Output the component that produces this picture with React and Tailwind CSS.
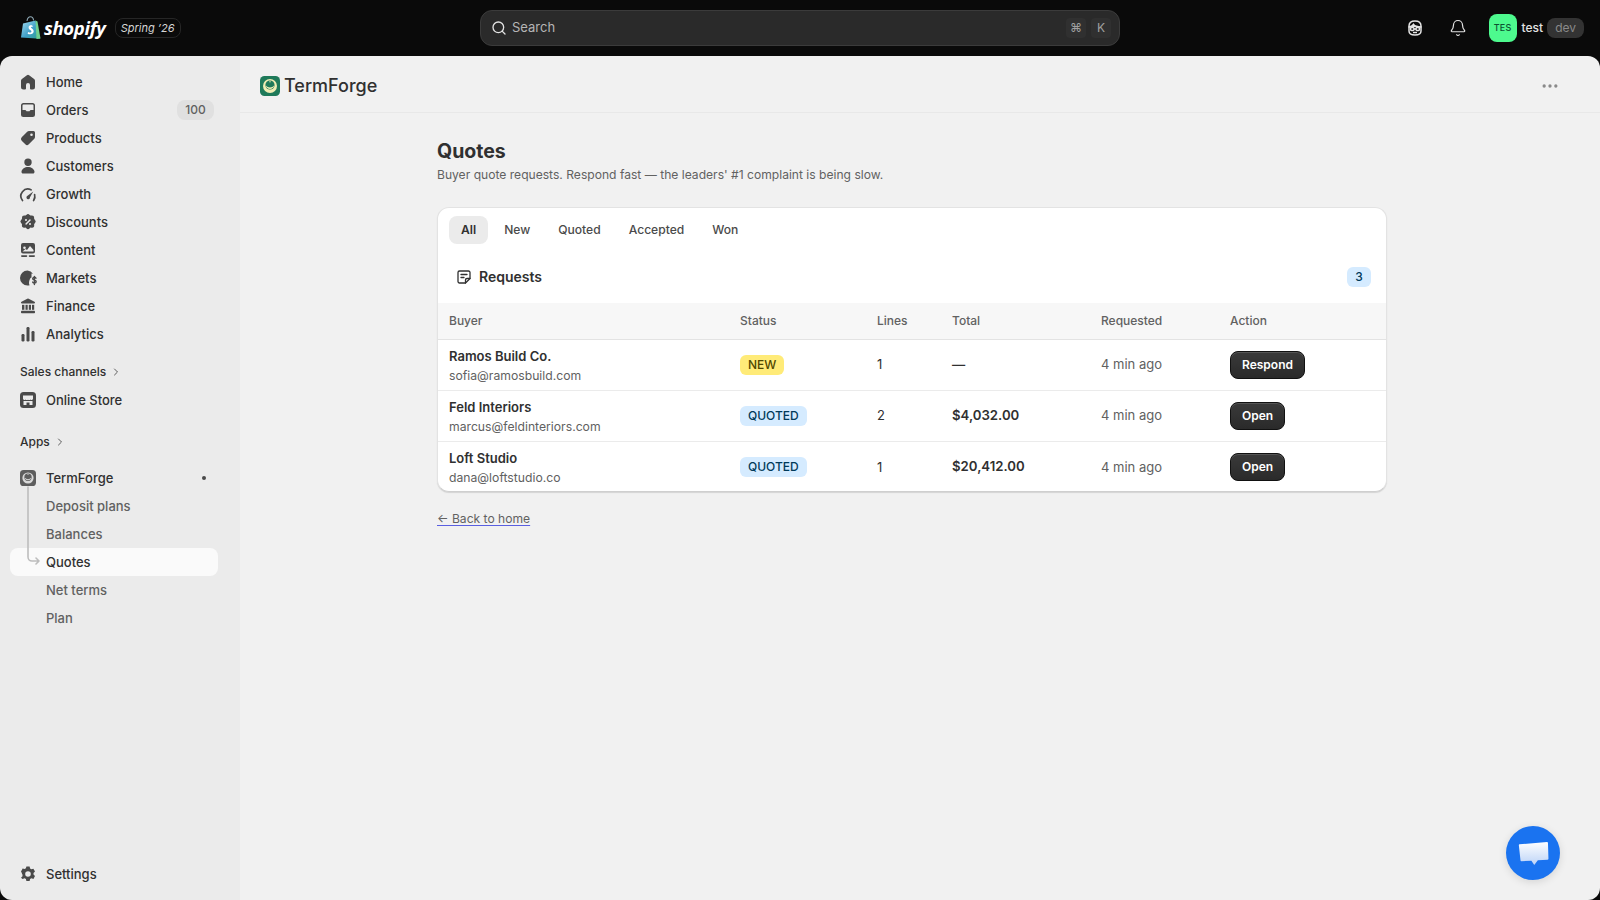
import { MoreHorizontal, Search, ChevronRight, Bell } from "lucide-react";

const ICONS = {
  home: <path d="M8.900 3.200a1.800 1.800 0 0 1 2.200 0l5 3.900c.6.4.9 1 .9 1.700V15a2.500 2.500 0 0 1-2.500 2.500H13a1 1 0 0 1-1-1V13a2 2 0 0 0-4 0v3.500a1 1 0 0 1-1 1H5.500A2.500 2.500 0 0 1 3 15V8.800c0-.7.300-1.300.9-1.700z" />,
  orders: <path fillRule="evenodd" d="M5.500 3A2.500 2.500 0 0 0 3 5.500v9A2.500 2.500 0 0 0 5.500 17h9a2.500 2.500 0 0 0 2.500-2.500v-9A2.500 2.500 0 0 0 14.500 3zM4.500 5.500a1 1 0 0 1 1-1h9a1 1 0 0 1 1 1V10h-2.600c-.5 0-.9.300-1.100.7l-.3.600H8.500l-.3-.6c-.2-.4-.6-.7-1.100-.7H4.500z" />,
  products: <path fillRule="evenodd" d="M11 3h4.500A1.500 1.500 0 0 1 17 4.500V9c0 .7-.3 1.300-.7 1.800l-5.500 5.500a2.500 2.500 0 0 1-3.500 0l-3.600-3.600a2.500 2.500 0 0 1 0-3.500l5.500-5.500C9.700 3.300 10.300 3 11 3m2.500 5a1.300 1.300 0 1 0 0-2.600 1.300 1.300 0 0 0 0 2.600" />,
  customers: <path d="M10 2.500a3.700 3.700 0 1 1 0 7.400 3.700 3.700 0 0 1 0-7.400M10 11c-3.300 0-6 1.900-6.500 4.400-.2 1 .6 2.100 1.700 2.100h9.600c1.100 0 1.900-1.100 1.700-2.100C16 12.900 13.300 11 10 11" />,
  growth: <><path fill="none" stroke="currentColor" strokeWidth="1.700" strokeLinecap="round" d="M4.500 16.500a7 7 0 0 1 8.500-10.700" /><path d="M15.300 7.500 12 13.200a1.800 1.800 0 1 1-2.500-1.400z" /><path fill="none" stroke="currentColor" strokeWidth="1.700" strokeLinecap="round" d="M16.600 10.500a7 7 0 0 1-1 6" /></>,
  discounts: <path fillRule="evenodd" d="M8.300 2.900a2.400 2.400 0 0 1 3.400 0l.8.700 1.100-.1a2.400 2.400 0 0 1 2.600 2.400l-.1 1.100.8.800a2.400 2.400 0 0 1 0 3.400l-.8.800.1 1.100a2.400 2.400 0 0 1-2.600 2.600l-1.100-.1-.8.700a2.400 2.400 0 0 1-3.400 0l-.8-.7-1.100.1a2.400 2.400 0 0 1-2.500-2.600l.1-1.100-.8-.8a2.400 2.400 0 0 1 0-3.400l.8-.8-.1-1.100a2.400 2.400 0 0 1 2.500-2.400l1.100.1zM12.600 8.500a.8.800 0 0 0-1.100-1.100l-4 4a.8.800 0 0 0 1.100 1.100zM8 9a1 1 0 1 0 0-2 1 1 0 0 0 0 2m4 4a1 1 0 1 0 0-2 1 1 0 0 0 0 2" />,
  content: <><path fillRule="evenodd" d="M5 3a2 2 0 0 0-2 2v6.500a2 2 0 0 0 2 2h10a2 2 0 0 0 2-2V5a2 2 0 0 0-2-2zm1.500 3.500a1.300 1.300 0 1 1 0 2.600 1.300 1.300 0 0 1 0-2.600m5.500-.5 3.500 4v1.500h-11l3-2.500 1.500 1z" /><rect x="3" y="15.300" width="6.300" height="1.600" rx=".8" /><rect x="10.700" y="15.300" width="6.300" height="1.600" rx=".8" /></>,
  markets: <><path d="M9.500 2.500a7.500 7.500 0 0 0 0 15c.8 0 1.500-.1 2.100-.3a5 5 0 0 1-.6-2.200c0-1.500.5-3.500 1.500-5l1-.5V5.500l1.500.300A7.500 7.500 0 0 0 9.500 2.500" /><path fill="none" stroke="currentColor" strokeWidth="1.400" strokeLinecap="round" d="M18 10.200c-.3-.6-.9-.9-1.600-.9-1 0-1.700.6-1.700 1.400 0 2 3.500 1 3.500 3 0 .8-.8 1.400-1.800 1.400-.7 0-1.400-.4-1.700-1M16.400 8.500v8" /></>,
  finance: <><path d="M9.300 2.700a1.500 1.500 0 0 1 1.400 0l5.800 3c.9.500.6 1.800-.4 1.800H3.900c-1 0-1.300-1.300-.4-1.800z" /><rect x="4" y="8.800" width="2.400" height="5" /><rect x="7.500" y="8.800" width="2.200" height="5" /><rect x="10.800" y="8.800" width="2.200" height="5" /><rect x="14" y="8.800" width="2.200" height="5" /><rect x="3" y="14.800" width="14" height="2.400" rx=".8" /></>,
  analytics: <><rect x="3.500" y="10" width="3" height="7.500" rx="1.200" /><rect x="8.500" y="3" width="3" height="14.500" rx="1.200" /><rect x="13.500" y="7" width="3" height="10.500" rx="1.200" /></>,
  settings: <path fillRule="evenodd" d="M8.400 2.500h3.200l.5 2.100 1.300.7 2-.6 1.600 2.800-1.500 1.500v1.600l1.500 1.500-1.600 2.800-2-.6-1.300.7-.5 2.100H8.400l-.5-2.100-1.300-.7-2 .6L3 13.800l1.500-1.500v-1.600L3 7.200l.6-.7 1-2.100 2 .6 1.300-.7zM10 12.800a2.800 2.800 0 1 0 0-5.600 2.800 2.800 0 0 0 0 5.600" />,
};

const NAV = [
  ["home", "Home"],
  ["orders", "Orders", "100"],
  ["products", "Products"],
  ["customers", "Customers"],
  ["growth", "Growth"],
  ["discounts", "Discounts"],
  ["content", "Content"],
  ["markets", "Markets"],
  ["finance", "Finance"],
  ["analytics", "Analytics"],
];

const ROWS = [
  { name: "Ramos Build Co.", email: "sofia@ramosbuild.com", status: "NEW", lines: 1, total: "—", action: "Respond" },
  { name: "Feld Interiors", email: "marcus@feldinteriors.com", status: "QUOTED", lines: 2, total: "$4,032.00", action: "Open" },
  { name: "Loft Studio", email: "dana@loftstudio.co", status: "QUOTED", lines: 1, total: "$20,412.00", action: "Open" },
];

function NavIcon({ name }) {
  return (
    <svg viewBox="0 0 20 20" fill="currentColor" className="w-5 h-5 text-[#4a4a4a] shrink-0">
      {ICONS[name]}
    </svg>
  );
}

function NavItem({ icon, label, badge }) {
  return (
    <div className="flex items-center h-7 pl-[18px] pr-[26px] text-[13px] font-medium text-[#303030]">
      <NavIcon name={icon} />
      <span className="ml-2 flex-1 pt-[2px]">{label}</span>
      {badge && (
        <span className="h-5 w-[37px] flex items-center justify-center rounded-lg bg-[#e0e0e0] text-xs text-[#616161]">{badge}</span>
      )}
    </div>
  );
}

function SectionLabel({ label, className }) {
  return (
    <div className={`flex items-center h-7 pl-5 text-xs font-medium text-[#303030] ${className}`}>
      {label}
      <ChevronRight className="w-3 h-3 ml-1 text-[#5c5c5c]" />
    </div>
  );
}

function AppLogo({ gray }) {
  const bg = gray ? "#5e5e5e" : "#1f7a5a";
  const fg = gray ? "#d9d9d9" : "#f0edb4";
  return (
    <svg viewBox="0 0 20 20" className="w-full h-full">
      <rect width="20" height="20" rx="4.500" fill={bg} />
      <circle cx="10" cy="10" r="7" fill={fg} />
      <circle cx="10" cy="9" r="4.600" fill={bg} />
      <path d="M5.800 9.500a4.300 4.300 0 0 0 8.400 0 5.500 5.500 0 0 1-8.400 0" fill={fg} />
      <circle cx="10" cy="5.700" r=".7" fill={fg} />
    </svg>
  );
}

function Sidebar() {
  return (
    <aside className="w-[240px] shrink-0 bg-[#ebebeb] flex flex-col pt-3 pb-3">
      {NAV.map(([icon, label, badge]) => (
        <NavItem key={label} icon={icon} label={label} badge={badge} />
      ))}
      <SectionLabel label="Sales channels" className="mt-[10px]" />
      <div className="flex items-center h-7 pl-5 text-[13px] font-medium text-[#303030]">
        <svg viewBox="0 0 16 16" className="w-4 h-4 shrink-0">
          <rect width="16" height="16" rx="3.500" fill="#4a4a4a" />
          <path d="M3 3.500h10v3.300a1.400 1.400 0 0 1-2.500.6 1.900 1.900 0 0 1-2.500.3 1.900 1.900 0 0 1-2.500-.3A1.400 1.400 0 0 1 3 6.800z" fill="#ebebeb" />
          <path d="M3.500 9h9v4h-3v-2.500h-3V13h-3z" fill="#ebebeb" />
        </svg>
        <span className="ml-2.5 pt-[2px]">Online Store</span>
      </div>
      <SectionLabel label="Apps" className="mt-[14px]" />
      <div className="relative mt-2">
        <div className="flex items-center h-7 pl-5 pr-[34px] text-[13px] font-medium text-[#303030]">
          <span className="w-4 h-4 shrink-0"><AppLogo gray /></span>
          <span className="ml-2.5 flex-1 pt-[2px]">TermForge</span>
          <span className="w-1 h-1 rounded-full bg-[#4a4a4a]" />
        </div>
        {["Deposit plans", "Balances", "Quotes", "Net terms", "Plan"].map((label) =>
          label === "Quotes" ? (
            <div key={label} className="flex items-center h-7 mx-2.5 w-[208px] pl-9 pt-[2px] rounded-lg bg-[#fafafa] text-[13px] font-medium text-[#303030]">
              {label}
            </div>
          ) : (
            <div key={label} className="flex items-center h-7 pl-[46px] pt-[2px] text-[13px] font-medium text-[#616161]">
              {label}
            </div>
          )
        )}
        <svg viewBox="0 0 14 82" className="absolute left-[27px] top-[22px] w-[14px] h-[82px]" fill="none" stroke="#bdbdbd" strokeWidth="1.600" strokeLinecap="round" strokeLinejoin="round">
          <path d="M1 1v70a4 4 0 0 0 4 4h7M9 72l3 3-3 3" />
        </svg>
      </div>
      <div className="mt-auto">
        <NavItem icon="settings" label="Settings" />
      </div>
    </aside>
  );
}

function TopBar() {
  return (
    <header className="h-14 shrink-0 bg-[#0a0a0a] grid grid-cols-[1fr_640px_1fr] items-center text-white">
      <div className="flex items-center pl-5">
        <svg viewBox="0 0 22 24" className="w-[22px] h-6 shrink-0">
          <defs>
            <linearGradient id="bag" x1="0" y1="0" x2="1" y2="1">
              <stop offset="0" stopColor="#a5dcf0" />
              <stop offset="0.55" stopColor="#3f9fc8" />
              <stop offset="1" stopColor="#2fa08a" />
            </linearGradient>
          </defs>
          <path d="M7 5c.4-2.600 1.800-4.200 3.500-4.200 1.600 0 2.800 1.400 3.100 3.500" fill="none" stroke="#8fa9b5" strokeWidth="1.100" />
          <path d="M15.500 4.500 20 22.800 1 21.500 3 7.500z" fill="url(#bag)" />
          <path d="M15.500 4.500 17.500 5.500 20.500 22.500 16.500 23z" fill="#6fcf8f" />
          <path d="M12.500 9.700c-.8-.5-3.800-.8-3.900 1.700-.1 2.400 2.900 2.300 2.800 4.100 0 1.200-1.600 1.300-3.300.4l-.5 1.800c2.500 1.200 6.100.7 6.100-2.400 0-2.600-2.900-2.900-2.800-4 0-.8 1.200-.8 2-.4z" fill="#fff" />
        </svg>
        <span className="ml-[2px] font-['Open_Sans',sans-serif] font-bold italic text-[18.500px] leading-none -tracking-[0.3px] text-white">shopify</span>
        <span className="ml-[9px] h-5 px-[5px] flex items-center rounded-lg border border-[#262626] text-[11px] italic text-[#d4d4d4]">Spring ’26</span>
      </div>
      <div className="h-9 flex items-center rounded-xl bg-[#2a2a2a] border border-[#3b3b3b] pl-2.5 pr-2">
        <Search className="w-4 h-4 text-[#e3e3e3]" strokeWidth={2} />
        <span className="ml-[5px] flex-1 text-[13px] text-[#b5b5b5]">Search</span>
        <span className="w-5 h-5 flex items-center justify-center rounded bg-[#303030] text-xs text-[#a0a0a0]">⌘</span>
        <span className="ml-[5px] w-5 h-5 flex items-center justify-center rounded bg-[#303030] text-xs text-[#a0a0a0]">K</span>
      </div>
      <div className="flex items-center justify-end pr-4">
        <svg viewBox="0 0 20 20" className="w-5 h-5 text-[#e3e3e3]" fill="none" stroke="currentColor" strokeWidth="1.500">
          <path d="M4 8c0-3 1.500-5 6-5s6 2 6 5v5c0 2.500-2.500 4-6 4s-6-1.500-6-4z" />
          <path d="M3.500 9c3 0 4-.8 5-2.500 1 1.700 4 2.500 8 2.500" fill="currentColor" />
          <rect x="5.500" y="9.500" width="3.500" height="3" rx="1.200" />
          <rect x="11" y="9.500" width="3.500" height="3" rx="1.200" />
          <path d="M9 11h2M8 14.500h4" />
        </svg>
        <Bell className="ml-6 w-[18px] h-[18px] text-[#e3e3e3]" strokeWidth={1.600} />
        <span className="ml-[22px] w-7 h-7 flex items-center justify-center rounded-lg bg-[#4dfa8e] text-[9px] font-medium tracking-wide text-[#0c5132]">TES</span>
        <span className="ml-[5px] text-xs font-medium text-[#e3e3e3]">test</span>
        <span className="ml-1 h-5 px-2 flex items-center rounded-lg bg-[#333333] text-xs text-[#8a8a8a]">dev</span>
      </div>
    </header>
  );
}

function StatusBadge({ status }) {
  const color = status === "NEW" ? "bg-[#ffeb78] text-[#4f4700]" : "bg-[#d5ebff] text-[#003a5a]";
  return (
    <span className={`inline-flex items-center h-5 px-2 rounded-md text-xs font-medium ${color}`}>{status}</span>
  );
}

function QuotesTable() {
  return (
    <table className="w-full table-fixed border-collapse text-xs">
      <thead>
        <tr className="h-9 bg-[#f7f7f7] border-b border-[#e3e3e3] text-left text-[#616161]">
          <th className="w-[302px] pl-[11px] font-medium">Buyer</th>
          <th className="w-[137px] font-medium">Status</th>
          <th className="w-[75px] font-medium">Lines</th>
          <th className="w-[149px] font-medium">Total</th>
          <th className="w-[129px] font-medium">Requested</th>
          <th className="font-medium">Action</th>
        </tr>
      </thead>
      <tbody>
        {ROWS.map((row, i) => {
          const last = i === ROWS.length - 1;
          const cell = last ? "pt-[2px]" : "";
          return (
            <tr key={row.name} className={last ? "h-[50px]" : "h-[51px] border-b border-[#ebebeb]"}>
              <td className="pl-[11px] pt-[2px]">
                <div className="text-[13px] leading-5 font-semibold text-[#303030]">{row.name}</div>
                <div className="pt-px text-[12.200px] leading-[18px] text-[#616161]">{row.email}</div>
              </td>
              <td className={cell}><StatusBadge status={row.status} /></td>
              <td className={`text-[13px] text-[#303030] ${cell}`}>{row.lines}</td>
              <td className={`text-[13.200px] font-semibold text-[#303030] ${cell}`}>{row.total}</td>
              <td className={`text-[13px] text-[#616161] ${cell}`}>4 min ago</td>
              <td className={cell}>
                <button className="h-7 px-[11px] rounded-lg bg-gradient-to-b from-[#3a3a3a] to-[#2a2a2a] border border-[#111111] shadow-[inset_0_1px_0_#555555] text-xs font-semibold text-white">
                  {row.action}
                </button>
              </td>
            </tr>
          );
        })}
      </tbody>
    </table>
  );
}

function Main() {
  return (
    <main className="flex-1 flex flex-col bg-[#f1f1f1] min-w-0">
      <div className="h-[57px] shrink-0 flex items-center pt-[3px] pl-5 pr-[40px] border-b border-[#e8e8e8]">
        <span className="w-5 h-5 shrink-0"><AppLogo /></span>
        <span className="ml-1 flex-1 text-lg font-medium text-[#303030]">TermForge</span>
        <MoreHorizontal className="w-5 h-5 text-[#8a8a8a]" />
      </div>
      <div className="w-[950px] ml-[197px] pt-[24px]">
        <h1 className="text-[19.500px] leading-7 font-bold text-[#303030]">Quotes</h1>
        <p className="text-[12.100px] leading-[20px] text-[#616161]">
          Buyer quote requests. Respond fast — the leaders' #1 complaint is being slow.
        </p>
        <section className="mt-[22px] rounded-xl bg-white overflow-hidden border border-[#e3e3e3] border-b-[#cfcfcf] shadow-[0_1px_1px_#d4d4d4]">
          <div className="flex gap-1 pt-2 pl-[11px] text-[12.100px] font-medium text-[#4a4a4a]">
            {["All", "New", "Quoted", "Accepted", "Won"].map((tab, i) => (
              <span key={tab} className={`h-7 px-3 flex items-center rounded-lg ${i === 0 ? "bg-[#ebebeb] text-[#303030] font-semibold" : ""}`}>
                {tab}
              </span>
            ))}
          </div>
          <div className="h-[59px] flex items-center pt-[6px] pl-[18px] pr-[15px]">
            <svg viewBox="0 0 16 16" className="w-4 h-4 text-[#303030]" fill="none" stroke="currentColor" strokeWidth="1.300" strokeLinecap="round" strokeLinejoin="round">
              <path d="M3.500 2h9A1.500 1.500 0 0 1 14 3.500V9.500L9.500 14h-6A1.500 1.500 0 0 1 2 12.500v-9A1.500 1.500 0 0 1 3.500 2z" />
              <path d="M5 5.500h6M5 8.500h3M9.500 14v-3a1.500 1.500 0 0 1 1.500-1.500h3" />
            </svg>
            <span className="ml-[7px] flex-1 text-sm font-semibold text-[#303030]">Requests</span>
            <span className="h-5 w-6 flex items-center justify-center rounded-md bg-[#d5ebff] text-xs font-medium text-[#003a5a]">3</span>
          </div>
          <QuotesTable />
        </section>
        <a className="inline-block mt-[17px] text-[12.100px] leading-5 text-[#616161] underline decoration-[#5a5fe0] underline-offset-2">
          ← Back to home
        </a>
      </div>
    </main>
  );
}

export default function App() {
  return (
    <div className="relative w-[1600px] h-[900px] overflow-hidden bg-[#0a0a0a] flex flex-col font-['Inter',sans-serif]">
      <TopBar />
      <div className="flex-1 min-h-0 flex rounded-xl overflow-hidden">
        <Sidebar />
        <Main />
      </div>
      <div className="absolute left-[1506px] top-[826px] w-[54px] h-[54px] rounded-full bg-[#1a73f0] flex items-center justify-center shadow-[0_2px_8px_rgba(0,0,0,0.12)]">
        <svg viewBox="0 0 32 28" className="w-[31px] h-[27px]">
          <defs>
            <linearGradient id="chat" x1="0" y1="0" x2="0" y2="1">
              <stop offset="0" stopColor="#ffffff" />
              <stop offset="1" stopColor="#bcd3f7" />
            </linearGradient>
          </defs>
          <path d="M1.500 4.500 30 2a1 1 0 0 1 1 1l.5 16.500a1 1 0 0 1-1 1L20.500 21l-3.700 5-3-4.600L3.500 22a1 1 0 0 1-1-1L.8 5.500a1 1 0 0 1 .7-1" fill="url(#chat)" />
        </svg>
      </div>
    </div>
  );
}
